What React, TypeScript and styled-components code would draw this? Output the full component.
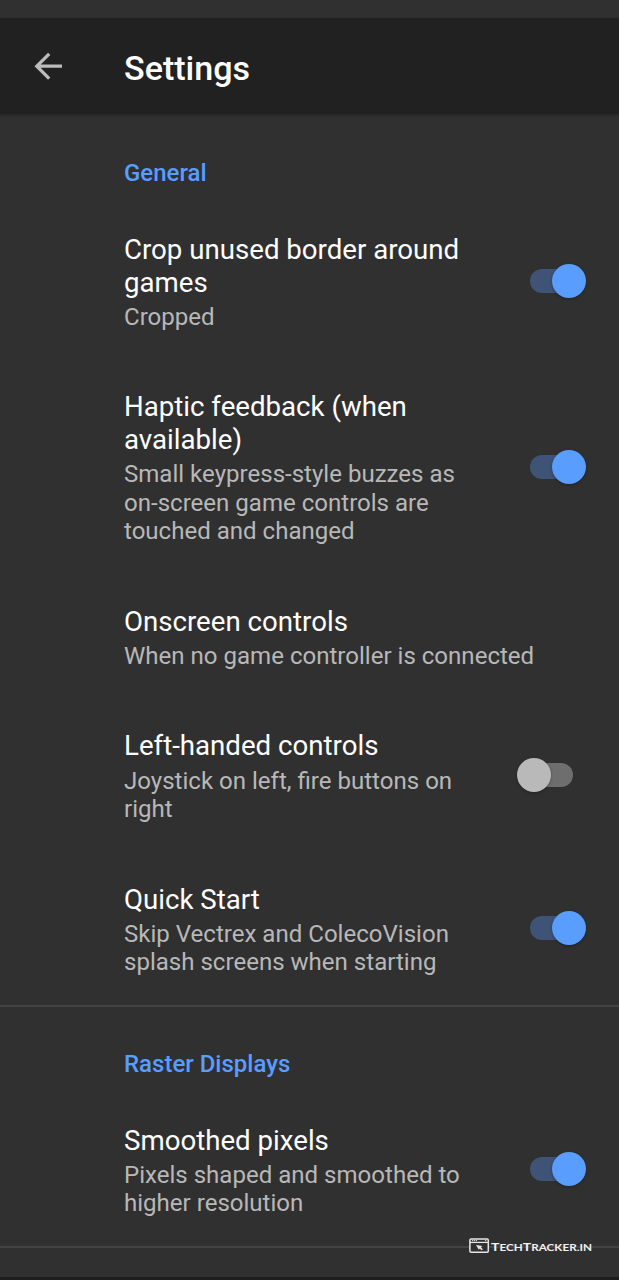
import React from "react";
import styled, { createGlobalStyle } from "styled-components";

const GlobalStyle = createGlobalStyle`
  *, *::before, *::after { box-sizing: border-box; }
  body {
    margin: 0;
    background: #303030;
    font-family: Roboto, "Liberation Sans", sans-serif;
  }
`;

const Screen = styled.div`
  position: relative;
  display: flex;
  flex-direction: column;
  width: 619px;
  height: 1280px;
  overflow: hidden;
  background: #303030;
`;

const StatusBar = styled.div`
  flex: none;
  height: 18px;
`;

const AppBar = styled.header`
  flex: none;
  display: flex;
  align-items: center;
  height: 96px;
  padding-left: 34px;
  background: #212121;
  box-shadow: 0 1px 3px rgba(0, 0, 0, 0.3);
`;

const BackButton = styled.button`
  display: flex;
  width: 90px;
  padding: 0;
  border: 0;
  background: none;
`;

const Heading = styled.h1`
  margin: 4px 0 0;
  color: #fff;
  font-size: 34.1px;
  font-weight: 500;
  line-height: 40px;
`;

const Section = styled.section`
  flex: none;
  border-bottom: 2px solid #434343;
`;

const Category = styled.h2<{ $height: number }>`
  display: flex;
  align-items: flex-end;
  height: ${(p) => p.$height}px;
  margin: 0;
  padding: 0 0 15px 124px;
  color: #589dff;
  font-size: 24px;
  font-weight: 500;
  line-height: 28px;
`;

const Row = styled.div`
  display: flex;
  align-items: center;
  padding: 0 33px 0 124px;
`;

const Copy = styled.div<{ $wide: boolean }>`
  flex: none;
  width: ${(p) => (p.$wide ? 460 : 350)}px;
  padding: 32px 0 28.2px;
`;

const Title = styled.div`
  color: #fff;
  font-size: 27.65px;
  line-height: 32.8px;
`;

const Summary = styled.div`
  margin-top: 3.3px;
  color: #b8b8b8;
  font-size: 24.05px;
  line-height: 28.4px;
`;

const Track = styled.div<{ $on: boolean }>`
  display: flex;
  align-items: center;
  justify-content: ${(p) => (p.$on ? "flex-end" : "flex-start")};
  width: 54px;
  height: 24px;
  margin-left: auto;
  margin-right: ${(p) => (p.$on ? 2 : 13)}px;
  border-radius: 12px;
  background: ${(p) => (p.$on ? "#3e5375" : "#6e6e6e")};
`;

const Thumb = styled.div<{ $on: boolean }>`
  flex: none;
  width: 34px;
  height: 34px;
  margin: ${(p) => (p.$on ? "0 -2px 0 0" : "0 0 0 -2px")};
  border-radius: 50%;
  background: ${(p) => (p.$on ? "#589dff" : "#b9b9b9")};
  box-shadow: 0 1px 3px rgba(0, 0, 0, 0.3);
`;

const NavEdge = styled.div`
  flex: none;
  height: 3px;
  margin-top: auto;
  background: #1e1e1e;
`;

const Watermark = styled.div`
  position: absolute;
  left: 469px;
  top: 1237px;
  display: flex;
`;

type Pref = { title: string; summary: string; on?: boolean };

const general: Pref[] = [
  { title: "Crop unused border around games", summary: "Cropped", on: true },
  {
    title: "Haptic feedback (when available)",
    summary: "Small keypress-style buzzes as on-screen game controls are touched and changed",
    on: true,
  },
  { title: "Onscreen controls", summary: "When no game controller is connected" },
  { title: "Left-handed controls", summary: "Joystick on left, fire buttons on right", on: false },
  {
    title: "Quick Start",
    summary: "Skip Vectrex and ColecoVision splash screens when starting",
    on: true,
  },
];

const raster: Pref[] = [
  { title: "Smoothed pixels", summary: "Pixels shaped and smoothed to higher resolution", on: true },
];

function Preference({ title, summary, on }: Pref) {
  return (
    <Row>
      <Copy $wide={on === undefined}>
        <Title>{title}</Title>
        <Summary>{summary}</Summary>
      </Copy>
      {on !== undefined && (
        <Track $on={on}>
          <Thumb $on={on} />
        </Track>
      )}
    </Row>
  );
}

export default function App() {
  return (
    <Screen>
      <GlobalStyle />
      <StatusBar />
      <AppBar>
        <BackButton aria-label="Back">
          <svg width="29" height="28" viewBox="0 0 29 28" fill="none" stroke="#bcbcbc" strokeWidth="3.3">
            <path d="M28 14.2H3M15.2 1.8L2.8 14.2l12.4 12.4" />
          </svg>
        </BackButton>
        <Heading>Settings</Heading>
      </AppBar>
      <Section>
        <Category $height={88}>General</Category>
        {general.map((p) => (
          <Preference key={p.title} {...p} />
        ))}
      </Section>
      <Section>
        <Category $height={86}>Raster Displays</Category>
        {raster.map((p) => (
          <Preference key={p.title} {...p} />
        ))}
      </Section>
      <NavEdge />
      <Watermark>
        <svg width="124" height="18" viewBox="0 0 124 18">
          <rect x="0.9" y="2.1" width="18.4" height="13.2" rx="1.2" fill="#303030" stroke="#e6e6e6" strokeWidth="1.5" />
          <path d="M1 5.4H19" stroke="#e6e6e6" strokeWidth="1.3" />
          <path d="M3 3.6H8M16 3.6h2" stroke="#ddd" strokeWidth="1" strokeDasharray="1.2 .7" />
          <path d="M7 7.9l6.4 1.2-1.4 1.2 1.8 2-1.2 1-1.9-1.9-.9 1.4z" fill="#e6e6e6" />
          <text
            x="22"
            y="14.3"
            fill="#f2f2f2"
            fontFamily="Lato, sans-serif"
            fontWeight="700"
            fontSize="9.2"
            textLength="101"
            lengthAdjust="spacingAndGlyphs"
          >
            <tspan fontSize="11">T</tspan>ECH<tspan fontSize="11">T</tspan>RACKER.IN
          </text>
        </svg>
      </Watermark>
    </Screen>
  );
}
